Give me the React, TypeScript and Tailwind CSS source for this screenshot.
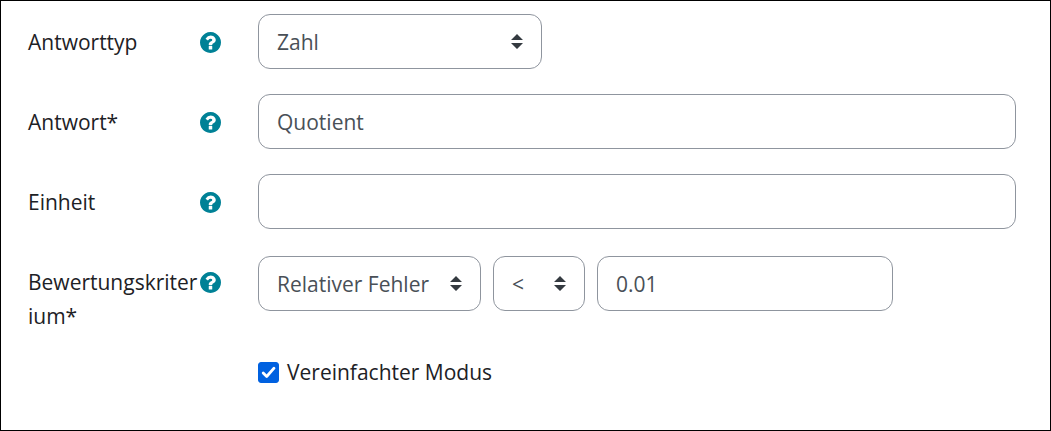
import { ReactNode, useState } from "react";

type RowProps = {
  id: string,
  label: string,
  children: ReactNode
}

type SelectProps = {
  id?: string,
  name: string,
  options: string[],
  className: string
}

const control = "h-[55px] rounded-xl border border-[#8f959e] bg-white px-[18px] text-[#495057] outline-none focus:border-[#0f6cbf]";

function HelpIcon() {
  return (
    <svg viewBox="128 128 1536 1536" className="size-[21px] fill-current">
      <path d="M1024 1376v-192q0-14-9-23t-23-9h-192q-14 0-23 9t-9 23v192q0 14 9 23t23 9h192q14 0 23-9t9-23zM1280 704q0-88-55.5-163t-138.5-116-170-41q-243 0-371 213-15 24 8 42l132 100q7 6 19 6 16 0 25-12 53-68 86-92 34-24 86-24 48 0 85.5 26t37.5 59q0 38-20 61t-68 45q-63 28-115.5 86.5t-52.5 125.5v36q0 14 9 23t23 9h192q14 0 23-9t9-23q0-19 21.5-49.5t54.5-49.5q32-18 49-28.5t46-35 44.5-48 28-60.5 12.5-81zM1664 896q0 209-103 385.5t-279.5 279.5-385.5 103-385.5-103-279.5-279.5-103-385.5 103-385.5 279.5-279.5 385.5-103 385.5 103 279.5 279.5 103 385.5z" />
    </svg>
  )
}

function Row({ id, label, children }: RowProps) {
  return (
    <div className="flex items-start">
      <div className="flex w-[230px] shrink-0 items-start pt-[11px] pr-[37px]">
        <label htmlFor={id} className="min-w-0 flex-1 wrap-anywhere">{label}</label>
        <button type="button" aria-label={`Hilfe zu ${label}`} className="flex h-[34px] items-center text-[#008196]">
          <HelpIcon />
        </button>
      </div>
      <div className="min-w-0 flex-1">{children}</div>
    </div>
  )
}

function Select({ id, name, options, className }: SelectProps) {
  return (
    <div className={`relative ${className}`}>
      <select id={id} aria-label={name} className={`${control} w-full appearance-none`}>
        {options.map((option) => <option key={option}>{option}</option>)}
      </select>
      <svg viewBox="0 0 4 5" className="pointer-events-none absolute top-5 right-[19px] h-[15px] w-3 fill-[#343a40]">
        <path d="M2 0L0 2h4zm0 5L0 3h4z" />
      </svg>
    </div>
  )
}

export default function App() {
  const [simple, setSimple] = useState(true)

  return (
    <form className="flex min-h-screen flex-col gap-[25px] border border-black bg-white pt-[13px] pr-[34px] pb-9 pl-[27px] font-['Open_Sans','Noto_Sans',sans-serif] text-[21px] leading-[34px] text-[#1d2125]">
      <Row id="type" label="Antworttyp">
        <Select id="type" name="Antworttyp" options={["Zahl", "Formel"]} className="w-[284px]" />
      </Row>

      <Row id="answer" label="Antwort*">
        <input id="answer" type="text" defaultValue="Quotient" className={`${control} w-full`} />
      </Row>

      <Row id="unit" label="Einheit">
        <input id="unit" type="text" className={`${control} w-full`} />
      </Row>

      <Row id="criterion" label="Bewertungskriterium*">
        <div className="flex flex-wrap gap-3 py-0.5">
          <Select id="criterion" name="Fehlerart" options={["Relativer Fehler", "Absoluter Fehler"]} className="w-[223px]" />
          <Select name="Vergleich" options={["<", "="]} className="w-[92px]" />
          <input aria-label="Toleranz" type="text" defaultValue="0.01" className={`${control} w-[296px]`} />
        </div>
      </Row>

      <label className="ml-[230px] flex h-7 items-center gap-2 self-start">
        <span className="relative flex">
          <input
            type="checkbox"
            checked={simple}
            onChange={(e) => setSimple(e.target.checked)}
            className="peer size-[21px] appearance-none rounded-[3px] border border-[#8f959e] checked:border-[#0061e0] checked:bg-[#0061e0]"
          />
          <svg viewBox="0 0 21 21" className="pointer-events-none absolute inset-0 hidden size-full fill-none stroke-white peer-checked:block" strokeWidth="2.8" strokeLinecap="round" strokeLinejoin="round">
            <path d="M5.2 11L8.7 14.5L16 6.2" />
          </svg>
        </span>
        Vereinfachter Modus
      </label>
    </form>
  )
}
